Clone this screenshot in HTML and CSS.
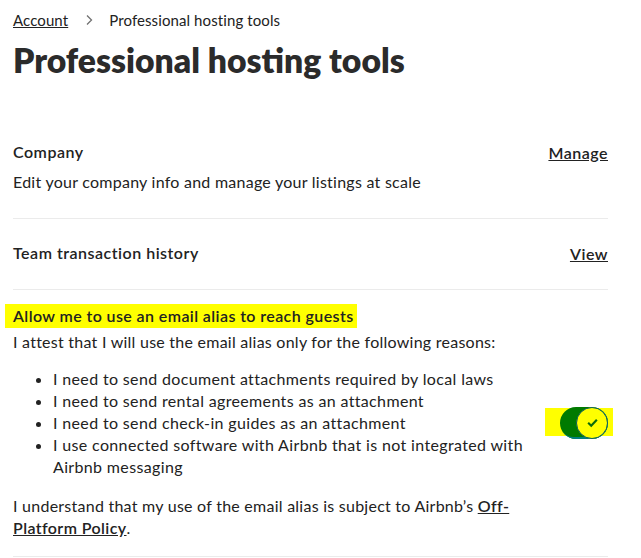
FILE: index.html
```html
<!DOCTYPE html>
<html lang="en">
<head>
  <meta charset="UTF-8">
  <title>Professional hosting tools</title>
  <meta name="viewport" content="width=device-width, initial-scale=1.0">
  <link rel="stylesheet" href="styles.css">
</head>
<body>
<main class="page">
  <nav class="crumbs">
    <a href="#" class="crumb-link">Account</a>
    <svg class="chev" viewBox="0 0 8 12" width="8" height="12"><path d="M2 1.5 6.5 6 2 10.5" fill="none" stroke="#717171" stroke-width="1.3"/></svg>
    <span>Professional hosting tools</span>
  </nav>

  <h1 class="title">Professional hosting tools</h1>

  <section class="row row-company">
    <div class="row-head">
      <h2 class="row-title">Company</h2>
      <a href="#" class="row-link">Manage</a>
    </div>
    <p class="row-text">Edit your company info and manage your listings at scale</p>
  </section>

  <section class="row row-team">
    <div class="row-head">
      <h2 class="row-title">Team transaction history</h2>
      <a href="#" class="row-link">View</a>
    </div>
  </section>

  <section class="row alias">
    <div class="alias-body">
      <h2 class="mark">Allow me to use an email alias to reach guests</h2>
      <p class="row-text">I attest that I will use the email alias only for the following reasons:</p>
      <ul class="reasons">
        <li>I need to send document attachments required by local laws</li>
        <li>I need to send rental agreements as an attachment</li>
        <li>I need to send check-in guides as an attachment</li>
        <li>I use connected software with Airbnb that is not integrated with Airbnb messaging</li>
      </ul>
      <p class="row-text">I understand that my use of the email alias is subject to Airbnb’s <a href="#" class="policy">Off-Platform Policy</a>.</p>
    </div>
    <div class="switch-wrap">
      <span class="switch-mark"></span>
      <span class="switch">
        <span class="knob">
          <svg viewBox="0 0 12 12" width="13" height="13"><path d="M2 6.3 4.8 9 10 3.4" fill="none" stroke="#0b6b0b" stroke-width="2"/></svg>
        </span>
      </span>
    </div>
  </section>
</main>
</body>
</html>
```

FILE: styles.css
```css
body {
  margin: 0;
  background-color: #ffffff;
  color: #222222;
  font-family: Lato, "Liberation Sans", sans-serif;
}
.page {
  padding: 10px 33px 0 13px;
}
.crumbs {
  display: flex;
  align-items: center;
  font-size: 15px;
  letter-spacing: 0.1px;
  height: 20px;
}
.crumb-link {
  color: #222222;
  text-decoration: underline;
}
.chev {
  margin: 0 16px 0 17px;
}
.title {
  font-size: 33.7px;
  font-weight: 800;
  margin: 10px 0 0;
  line-height: 40px;
  color: #2b2b2b;
}
.row {
  border-bottom: 1px solid #ebebeb;
}
.row-company {
  margin-top: 61px;
  padding-bottom: 25px;
}
.row-team {
  padding: 23px 0 25px;
}
.row-head {
  display: flex;
  justify-content: space-between;
  align-items: center;
}
.row-title {
  font-size: 16px;
  font-weight: 600;
  letter-spacing: 0.5px;
  margin: 0;
  line-height: 22px;
}
.row-link {
  color: #222222;
  font-weight: 600;
  font-size: 16px;
  letter-spacing: 0.5px;
  text-decoration: underline;
}
.row-text {
  font-size: 16px;
  letter-spacing: 0.25px;
  line-height: 22px;
  margin: 8px 0 0;
}
.alias {
  display: flex;
  align-items: center;
  gap: 20px;
  padding: 14px 0 17px;
}
.alias-body {
  flex: 1;
}
.mark {
  display: inline-block;
  background-color: #ffff00;
  font-size: 16px;
  font-weight: 600;
  letter-spacing: 0.4px;
  line-height: 22px;
  margin: 0 0 0 -8px;
  padding: 1px 3px 1px 8px;
}
.alias .row-text {
  margin-top: 3px;
}
.reasons {
  margin: 15px 0 17px;
  padding-left: 40px;
  font-size: 16px;
  letter-spacing: 0.35px;
  line-height: 22px;
}
.policy {
  color: #222222;
  font-weight: 600;
  font-size: 16px;
  letter-spacing: 0.4px;
  text-decoration: underline;
}
.switch-wrap {
  position: relative;
  flex: none;
  width: 48px;
  height: 32px;
  margin-top: 2px;
}
.switch-mark {
  position: absolute;
  left: -15px;
  right: -5px;
  top: 1px;
  bottom: 3px;
  background-color: #ffff00;
}
.switch {
  position: absolute;
  inset: 0;
  background-color: #007a00;
  border-radius: 16px;
  box-shadow: inset -2px -2px 0 #007f7f;
}
.knob {
  position: absolute;
  right: 0;
  top: 0;
  width: 30px;
  height: 30px;
  border-radius: 50%;
  background-color: #ffff00;
  border: 1px solid #0a5e5e;
  display: flex;
  align-items: center;
  justify-content: center;
}
```
